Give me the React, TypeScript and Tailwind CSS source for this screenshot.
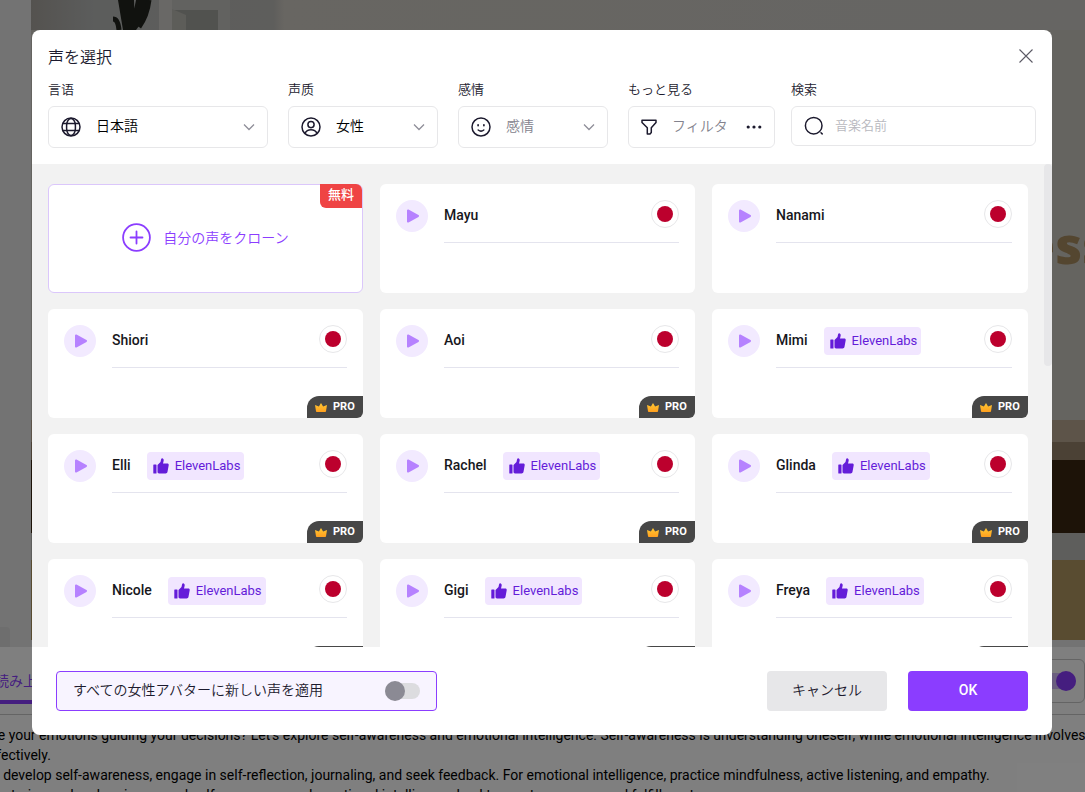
import React, { useState } from 'react'

type Voice = {
  name: string;
  eleven?: boolean;
  pro?: boolean;
}

const voices: Voice[] = [
  { name: 'Mayu' },
  { name: 'Nanami' },
  { name: 'Shiori', pro: true },
  { name: 'Aoi', pro: true },
  { name: 'Mimi', eleven: true, pro: true },
  { name: 'Elli', eleven: true, pro: true },
  { name: 'Rachel', eleven: true, pro: true },
  { name: 'Glinda', eleven: true, pro: true },
  { name: 'Nicole', eleven: true, pro: true },
  { name: 'Gigi', eleven: true, pro: true },
  { name: 'Freya', eleven: true, pro: true },
];

const GlobeIcon = () => (
  <svg className="w-5 h-5" viewBox="0 0 20 20" fill="none" stroke="#1c1a2e" strokeWidth="1.5">
    <circle cx="10" cy="10" r="9" />
    <rect x="5.6" y="1.6" width="8.8" height="16.8" rx="4.4" ry="7" />
    <path d="M2 6.4h16M2 13.6h16" />
  </svg>
);

const UserIcon = () => (
  <svg className="w-5 h-5" viewBox="0 0 20 20" fill="none" stroke="#1c1a2e" strokeWidth="1.5">
    <circle cx="10" cy="10" r="9" />
    <circle cx="10" cy="7.6" r="3.1" />
    <path d="M4 16.4c1.2-2.5 3.4-3.6 6-3.6s4.8 1.1 6 3.6" />
  </svg>
);

const SmileIcon = () => (
  <svg className="w-5 h-5" viewBox="0 0 20 20" fill="none" stroke="#1c1a2e" strokeWidth="1.5" strokeLinecap="round">
    <circle cx="10" cy="10" r="9" />
    <path d="M7.1 7.8v.8M12.9 7.8v.8" strokeWidth="1.7" />
    <path d="M7.2 13c1.5 1.2 4.1 1.2 5.6 0" />
  </svg>
);

const FunnelIcon = () => (
  <svg className="w-4 h-4" viewBox="0 0 16 16" fill="none" stroke="#1c1a2e" strokeWidth="1.5" strokeLinejoin="round">
    <path d="M1 1.2h14v2.3l-4.7 5.2v4.8L9 15H6.3V8.7L1 3.5z" />
  </svg>
);

const SearchIcon = () => (
  <svg className="w-5 h-5 shrink-0" viewBox="0 0 20 20" fill="none" stroke="#1c1a2e" strokeWidth="1.5" strokeLinecap="round">
    <circle cx="9.7" cy="9.7" r="8.3" />
    <path d="M17 16.7l1.2 1.2" />
  </svg>
);

const ChevronIcon = () => (
  <svg className="absolute right-[13px] top-[17px] w-3 h-2 pointer-events-none" viewBox="0 0 12 8" fill="none" stroke="#8f8e99" strokeWidth="1.3">
    <path d="M1 1.5l5 5 5-5" />
  </svg>
);

const ThumbIcon = () => (
  <svg className="w-4 h-4" viewBox="0 0 16 16" fill="#641cd9">
    <rect x="0.3" y="6.5" width="3.2" height="9" rx="0.6" />
    <path d="M4.5 7l3-3.1.6-2.6C8.3.5 9 .1 9.700.4c1 .4 1.200 1.600.9 2.700L10 5.600h4.300c1 0 1.600.7 1.400 1.600l-1.200 6.600c-.2 1-.9 1.700-1.900 1.700H6.800c-.9 0-2.300-.3-2.300-1.200z" />
  </svg>
);

const CrownIcon = () => (
  <svg className="w-3 h-[9px]" viewBox="0 0 12 9">
    <defs>
      <linearGradient id="crown" x1="0" y1="0" x2="0" y2="1">
        <stop offset="0" stopColor="#ffc933" />
        <stop offset="1" stopColor="#ff9f1f" />
      </linearGradient>
    </defs>
    <path d="M6 0l2.1 3.4L12 2l-1 6.300a.8.8 0 0 1-.8.7H1.800a.8.8 0 0 1-.8-.7L0 2l3.900 1.400z" fill="url(#crown)" />
  </svg>
);

const SelectField = ({ id, label, icon, options, width, muted }: any) => (
  <div className={width}>
    <label htmlFor={id} className="block text-[13px] leading-4">{label}</label>
    <div className="relative mt-2">
      <div className="absolute left-[13px] top-[11px] pointer-events-none">{icon}</div>
      <select
        id={id}
        className={`appearance-none w-full h-[42px] rounded-md border border-[#e7e7e9] bg-white pl-[47px] pr-8 pb-0.5 text-sm font-[350] outline-none ${muted ? 'text-[#83828d]' : 'text-black'}`}
      >
        {options.map((item: string) => (
          <option key={item}>{item}</option>
        ))}
      </select>
      <ChevronIcon />
    </div>
  </div>
);

const VoiceCard = ({ name, eleven, pro }: Voice) => (
  <div className="relative h-[109px] rounded-md bg-white p-4">
    <div className="flex items-start gap-4">
      <button aria-label={`Play ${name}`} className="w-8 h-8 shrink-0 rounded-full bg-[#f2eaff] flex items-center justify-center">
        <svg className="w-3.5 h-3.5 ml-0.5" viewBox="0 0 14 14" fill="#b682ff" stroke="#b682ff" strokeWidth="2" strokeLinejoin="round">
          <path d="M2 1.5L12 7 2 12.5z" />
        </svg>
      </button>
      <div className="flex-1 h-[43px] border-b border-[#e4e4ee] flex items-start">
        <span className="text-sm leading-[30px] font-medium text-[#17171c]">{name}</span>
        {eleven && (
          <span className="ml-4 mt-0.5 h-7 rounded bg-[#f1e6ff] pl-1.5 pr-1 flex items-center gap-1.5 text-[13px] text-[#641cd9]">
            <ThumbIcon />
            ElevenLabs
          </span>
        )}
        <span className="ml-auto w-7 h-7 rounded-full border border-[#e7e7e9] flex items-center justify-center">
          <span className="w-4 h-4 rounded-full bg-[#bc002d]"></span>
        </span>
      </div>
    </div>
    {pro && (
      <div className="absolute right-0 bottom-0 h-[22px] w-14 rounded-tl-xl rounded-br-md bg-[#474747] pl-2 flex items-center gap-1.5 text-[11px] font-bold text-white">
        <CrownIcon />
        PRO
      </div>
    )}
  </div>
);

// dimmed editor behind the dialog
const EditorBackground = () => (
  <div className="h-screen overflow-hidden flex flex-col bg-white">
    <div className="h-[647px] shrink-0 flex bg-[#e6e6e6]">
      <div className="w-[31px] shrink-0 flex flex-col justify-end">
        <div className="w-2.5 h-5 rounded-tr bg-[#dcdcdc]"></div>
      </div>
      <div className="flex-1 h-[640px] flex flex-col bg-[#cbc8c1]">
        <svg className="w-full h-[30px] shrink-0" viewBox="0 0 1054 30" preserveAspectRatio="xMinYMin slice">
          <defs>
            <linearGradient id="wall" x1="0" y1="0" x2="1" y2="0">
              <stop offset="0" stopColor="#a9a59f" />
              <stop offset="0.06" stopColor="#b8bab9" />
              <stop offset="0.23" stopColor="#bdbcb8" />
              <stop offset="0.24" stopColor="#d0ccc4" />
              <stop offset="1" stopColor="#cccbc7" />
            </linearGradient>
          </defs>
          <rect width="1054" height="30" fill="url(#wall)" />
          <rect x="128" width="13" height="30" fill="#d2d1cd" />
          <rect x="141" width="58" height="30" fill="#c5c5c1" />
          <rect x="141" y="10" width="46" height="20" fill="#a3a49e" />
          <path d="M141 9l14 6v15h-14z" fill="#bbbab3" />
          <path d="M87 0h16l1 30H92zM105 0h12l-6 22-6 8h-6z" fill="#22251f" />
          <path d="M82 19q5 0 6 11M118 0q-2 16-10 27" fill="none" stroke="#22251f" strokeWidth="5" />
        </svg>
        <div className="h-[390px] text-right overflow-hidden pt-[189px]">
          <span className="text-[52px] leading-[50px] font-extrabold text-[#a88c60] -mr-6 font-['Open_Sans',sans-serif]">ess</span>
        </div>
        <div className="h-[22px] bg-[#baa893]"></div>
        <div className="h-[18px] bg-[#96836a]"></div>
        <div className="h-[73px] bg-[#3b2710]"></div>
        <div className="h-[27px] bg-[#bdbcb9]"></div>
        <div className="flex-1 bg-[#b29963]"></div>
      </div>
    </div>
    <div className="h-[68px] shrink-0 flex justify-between border-b border-[#c8c8c8]">
      <div className="w-24 -ml-4 h-[57px] border-b-4 border-[#8b3dff] text-sm leading-5 text-[#8b3dff] pt-6">
        <span className="ml-[11px]">読み上げる</span>
      </div>
      <div className="mt-3 h-11 w-40 rounded-md border border-[#c8c8c8] flex items-center justify-end pr-2">
        <div className="w-9 h-4 rounded-full bg-[#d6bfff] flex items-center justify-end">
          <div className="w-5 h-5 rounded-full bg-[#8b3dff]"></div>
        </div>
      </div>
    </div>
    <div className="-ml-4 pt-[10px] text-sm leading-5 text-black whitespace-nowrap">
      <p>Are your emotions guiding your decisions? Let's explore self-awareness and emotional intelligence. Self-awareness is understanding oneself, while emotional intelligence involves</p>
      <p>effectively.</p>
      <p>To develop self-awareness, engage in self-reflection, journaling, and seek feedback. For emotional intelligence, practice mindfulness, active listening, and empathy.</p>
      <p>Mastering and embracing us and self-awareness and emotional intelligence lead to greater success and fulfillment.</p>
    </div>
  </div>
);

const App = () => {
  const [search, setSearch] = useState('');
  const [applyAll, setApplyAll] = useState(false);

  return (
    <div className="relative h-screen overflow-hidden font-[Roboto,'Noto_Sans_CJK_JP',sans-serif] text-[#1c1a2e]">
      <EditorBackground />
      <div className="absolute inset-0 bg-black/50 pl-8 pr-[33px] pt-[30px] pb-[57px] flex">
        <div role="dialog" aria-labelledby="voice-title" className="flex-1 min-w-0 flex flex-col rounded-lg bg-white overflow-hidden">
          <div className="px-4 pt-4 pb-4 font-[350]">
            <div className="flex justify-between items-start">
              <h2 id="voice-title" className="text-base leading-6">声を選択</h2>
              <button aria-label="閉じる" className="mt-[3px] mr-[3px]">
                <svg className="w-3.5 h-3.5" viewBox="0 0 14 14" fill="none" stroke="#5c5b66" strokeWidth="1.1">
                  <path d="M.5.5l13 13M13.5.5l-13 13" />
                </svg>
              </button>
            </div>
            <div className="flex items-start mt-3">
              <SelectField id="language" label="言语" icon={<GlobeIcon />} options={['日本語']} width="w-[220px] mr-5" />
              <SelectField id="gender" label="声质" icon={<UserIcon />} options={['女性']} width="w-[150px] mr-5" />
              <SelectField id="emotion" label="感情" icon={<SmileIcon />} options={['感情']} width="w-[150px] mr-5" muted />
              <div className="w-[147px] mr-4">
                <label htmlFor="filter" className="block text-[13px] leading-4">もっと見る</label>
                <button id="filter" className="mt-2 w-full h-[42px] rounded-md border border-[#e7e7e9] pl-3 pr-3 flex items-center text-sm text-[#83828d]">
                  <FunnelIcon />
                  <span className="ml-[15px] pb-0.5">フィルタ</span>
                  <svg className="ml-auto w-4 h-1" viewBox="0 0 16 4" fill="#1c1a2e">
                    <circle cx="2.2" cy="2" r="1.6" />
                    <circle cx="8" cy="2" r="1.6" />
                    <circle cx="13.8" cy="2" r="1.6" />
                  </svg>
                </button>
              </div>
              <div className="flex-1 min-w-0">
                <label htmlFor="search" className="block text-[13px] leading-4">検索</label>
                <div className="mt-2 h-10 rounded-md border border-[#e7e7e9] px-3 flex items-center gap-[11px]">
                  <SearchIcon />
                  <input
                    id="search"
                    type="text"
                    value={search}
                    onChange={(e) => setSearch(e.target.value)}
                    className="flex-1 min-w-0 text-[13px] outline-none placeholder:text-[#b8b8be]"
                    placeholder="音楽名前"
                  />
                </div>
              </div>
            </div>
          </div>

          <div className="flex-1 min-h-0 overflow-hidden bg-[#f2f2f2] flex items-start">
            <div className="flex-1 grid grid-cols-[315fr_315fr_316fr] gap-x-[17px] gap-y-4 pl-4 pr-4 pt-5">
              <button className="relative h-[109px] rounded-md border border-[#dbc7fb] bg-white pb-0.5 flex items-center justify-center gap-3 text-sm font-[350] text-[#8b3dff]">
                <svg className="w-[29px] h-[29px]" viewBox="0 0 29 29" fill="none" stroke="#8b3dff" strokeWidth="1.8" strokeLinecap="round">
                  <circle cx="14.5" cy="14.5" r="13.4" />
                  <path d="M14.5 8.5v12M8.5 14.5h12" />
                </svg>
                自分の声をクローン
                <span className="absolute right-0 -top-px h-6 w-[42px] rounded-bl-md rounded-tr-md bg-[#ef4444] text-white text-[13px] leading-[22px] font-medium">無料</span>
              </button>
              {voices.map((voice) => (
                <VoiceCard key={voice.name} {...voice} />
              ))}
            </div>
            <div className="w-2 h-[202px] rounded bg-[#e7e7e9]"></div>
          </div>

          <div className="h-[88px] shrink-0 px-6 flex items-center">
            <label htmlFor="apply-all" className="w-[381px] h-10 rounded border border-[#8b3dff] bg-[#f8f4ff] px-4 flex items-center justify-between text-sm">
              <span className="pb-0.5 font-[350]">すべての女性アバターに新しい声を適用</span>
              <input id="apply-all" type="checkbox" className="sr-only peer" checked={applyAll} onChange={() => setApplyAll(!applyAll)} />
              <span className="w-[35px] h-4 rounded-full bg-[#dcdcdf] flex items-center peer-checked:justify-end">
                <span className="w-5 h-5 rounded-full bg-[#8b8a94]"></span>
              </span>
            </label>
            <button className="ml-auto w-[120px] h-10 rounded bg-[#e7e7e9] text-sm font-[350] pb-0.5">キャンセル</button>
            <button className="ml-[21px] w-[120px] h-10 rounded bg-[#8b3dff] text-sm font-medium text-white pb-0.5">OK</button>
          </div>
        </div>
      </div>
    </div>
  )
}

export default App
